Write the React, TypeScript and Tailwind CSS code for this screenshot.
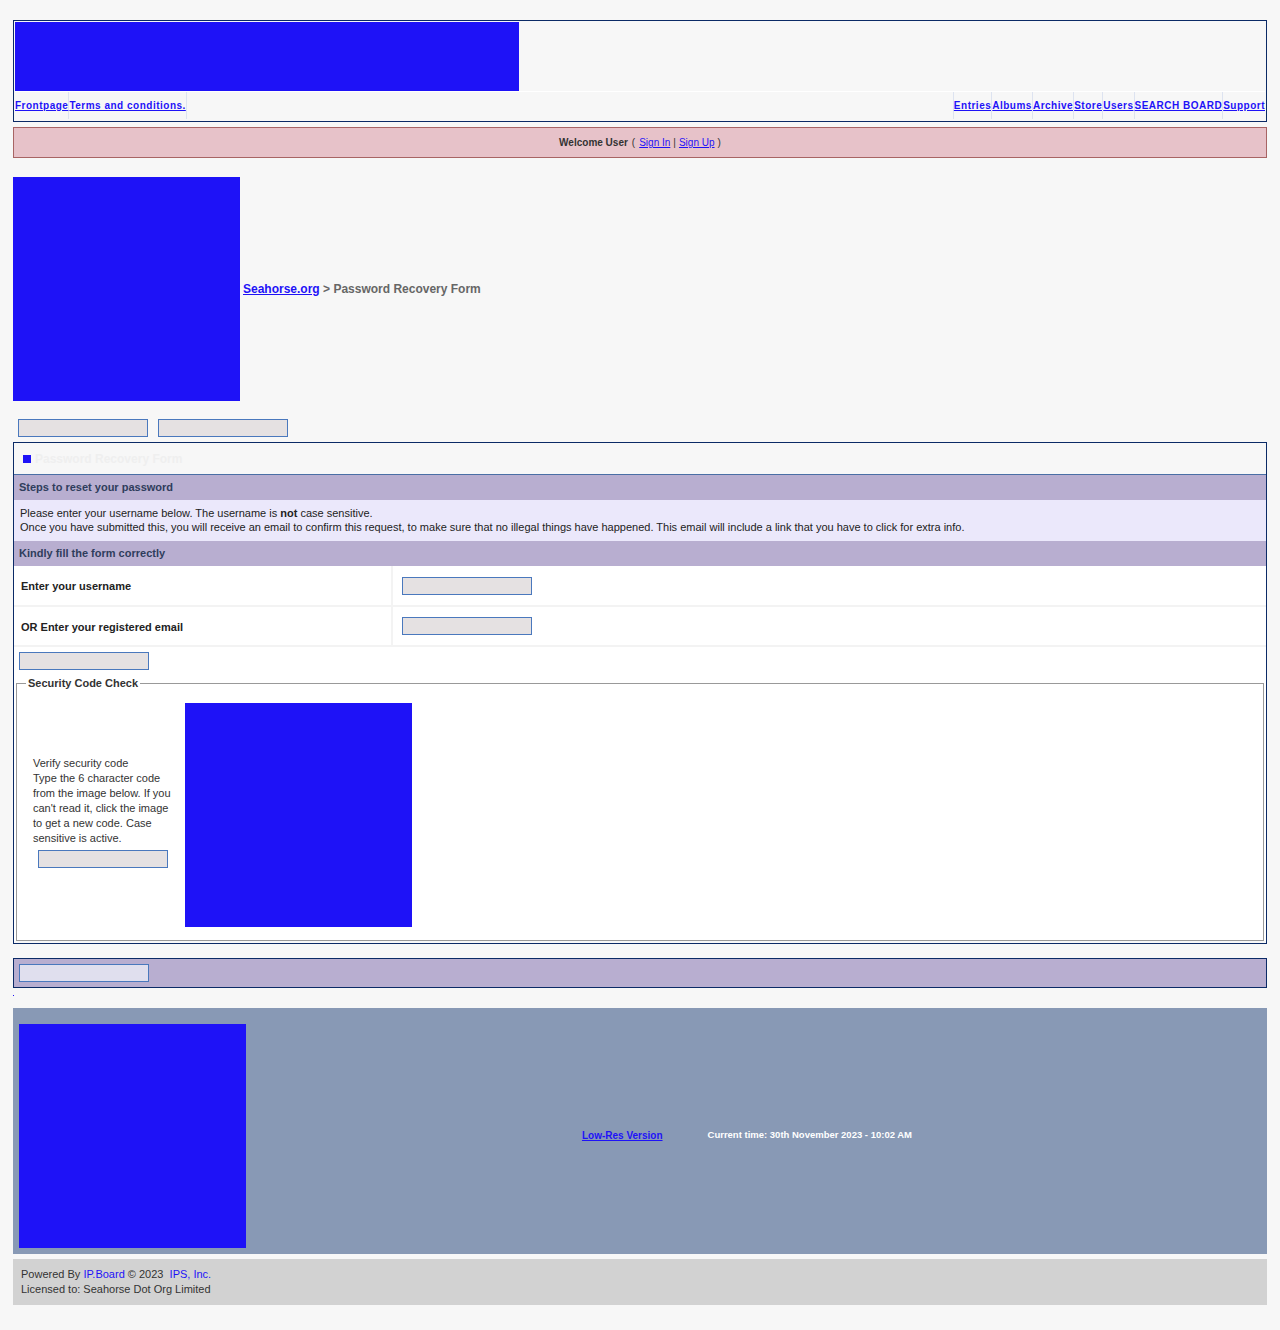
import React from 'react';

const navLeft = ['Frontpage', 'Terms and conditions.'];
const navRight = ['Entries', 'Albums', 'Archive', 'Store', 'Users', 'SEARCH BOARD', 'Support'];

const Field: React.FC<{ className?: string }> = ({ className = '' }) => (
  <div className={`h-[18px] w-[130px] border border-[#4a78bd] bg-[#e5e1e2] ${className}`} />
);

const App: React.FC = () => {
  return (
    <div className="min-h-[1330px] bg-[#f7f7f7] px-[13px] pt-[20px] pb-[25px] font-['Liberation_Sans',Arial,sans-serif] text-[11px] text-[#222]">
      {/* Header */}
      <div className="border border-[#0b2a66] p-[1px]">
        <div className="h-[69px] w-[504px] bg-[#1e12f7]" />
        <div className="flex h-[29px] items-center border-t border-white bg-[#f7f7f7] pb-[1px] text-[10px] font-bold tracking-[0.5px]">
          {navLeft.map((n) => (
            <div key={n} className="flex h-full items-center border-r border-[#dde3f0]">
              <a href="#" className="text-[#1e12f7] underline">{n}</a>
            </div>
          ))}
          <div className="flex-1" />
          {navRight.map((n) => (
            <div key={n} className="flex h-full items-center border-l border-[#dde3f0]">
              <a href="#" className="text-[#1e12f7] underline">{n}</a>
            </div>
          ))}
        </div>
      </div>

      {/* Welcome bar */}
      <div className="mt-[5px] flex h-[31px] items-center justify-center border border-[#a86464] bg-[#e7c2c9] text-[10px] text-[#333]">
        <b>Welcome User</b>
        <span className="ml-[4px]">(</span>
        <a href="#" className="ml-[4px] text-[#1e12f7] underline">Sign In</a>
        <span className="mx-[3px]">|</span>
        <a href="#" className="text-[#1e12f7] underline">Sign Up</a>
        <span className="ml-[3px]">)</span>
      </div>

      {/* Breadcrumb */}
      <div className="mt-[19px] flex items-center">
        <div className="h-[224px] w-[227px] bg-[#1e12f7]" />
        <div className="ml-[3px] text-[12px] font-bold text-[#666]">
          <a href="#" className="text-[#1e12f7] underline">Seahorse.org</a> &gt; Password Recovery Form
        </div>
      </div>

      {/* Top buttons */}
      <div className="mt-[18px] flex gap-[10px] pl-[5px]">
        <Field />
        <Field />
      </div>

      {/* Main box */}
      <div className="mt-[5px] border border-[#0b2a66]">
        <div className="flex h-[32px] items-center border-b border-[#4a6fa5] pl-[9px]">
          <div className="h-[8px] w-[8px] bg-[#1e12f7]" />
          <span className="ml-[4px] text-[12px] font-bold text-[#efefef]">Password Recovery Form</span>
        </div>
        <div className="flex h-[25px] items-center bg-[#b8aed0] pl-[5px] font-bold text-[#2f3d5c]">
          Steps to reset your password
        </div>
        <div className="bg-[#ebe8fb] px-[6px] pt-[6px] pb-[7px] leading-[14px]">
          Please enter your username below. The username is <b>not</b> case sensitive.
          <br />
          Once you have submitted this, you will receive an email to confirm this request, to make sure that no illegal things have happened. This email will include a link that you have to click for extra info.
        </div>
        <div className="flex h-[25px] items-center bg-[#b8aed0] pl-[5px] font-bold text-[#2f3d5c]">
          Kindly fill the form correctly
        </div>
        <div className="bg-white">
          <div className="flex h-[41px] border-b-2 border-[#f3f3f3]">
            <div className="flex w-[379px] items-center border-r-2 border-[#f3f3f3] pl-[7px] pt-[2px] font-bold">Enter your username</div>
            <div className="flex items-center pl-[9px]"><Field /></div>
          </div>
          <div className="flex h-[40px] border-b-2 border-[#f3f3f3]">
            <div className="flex w-[379px] items-center border-r-2 border-[#f3f3f3] pl-[7px] pt-[2px] font-bold">OR Enter your registered email</div>
            <div className="flex items-center pl-[9px]"><Field /></div>
          </div>
          <div className="pl-[5px] pt-[5px]">
            <Field />
          </div>
          <fieldset className="mx-[2px] mt-[5px] mb-[2px] border border-[#999] pb-[13px]">
            <legend className="ml-[9px] px-[2px] font-bold text-[#333]">Security Code Check</legend>
            <div className="ml-[16px] mt-[11px] flex items-center">
              <div className="w-[152px] pb-[5px] leading-[15px] text-[#333]">
                Verify security code
                <br />
                <span className="block w-[140px]">Type the 6 character code from the image below. If you can't read it, click the image to get a new code. Case sensitive is active.</span>
                <Field className="ml-[5px] mt-[4px]" />
              </div>
              <div className="h-[224px] w-[227px] bg-[#1e12f7]" />
            </div>
          </fieldset>
        </div>
      </div>

      {/* Bottom bar */}
      <div className="mt-[14px] flex h-[30px] items-center border border-[#0b2a66] bg-[#b8aed0] pl-[5px]">
        <div className="h-[18px] w-[130px] border border-[#4a78bd] bg-[#e0dfee]" />
      </div>

      <div className="h-[20px] pt-[7px]">
        <div className="h-[1px] w-[1px] bg-[#1e12f7]" />
      </div>

      {/* Footer */}
      <div className="flex items-center bg-[#8899b5] pb-[6px] pl-[6px] pt-[16px]">
        <div className="h-[224px] w-[227px] bg-[#1e12f7]" />
        <div className="flex flex-1 items-center justify-center gap-[45px] pr-[19px] font-bold">
          <a href="#" className="text-[10px] text-[#1e12f7] underline">Low-Res Version</a>
          <span className="text-[9.5px] text-white">Current time: 30th November 2023 - 10:02 AM</span>
        </div>
      </div>

      {/* Copyright */}
      <div className="mt-[5px] bg-[#d2d2d2] px-[8px] py-[8px] leading-[15px] text-[#333]">
        Powered By <a href="#" className="text-[#1e12f7]">IP.Board</a> © 2023 &nbsp;<a href="#" className="text-[#1e12f7]">IPS, Inc.</a>
        <br />
        Licensed to: Seahorse Dot Org Limited
      </div>
    </div>
  );
};

export default App;
